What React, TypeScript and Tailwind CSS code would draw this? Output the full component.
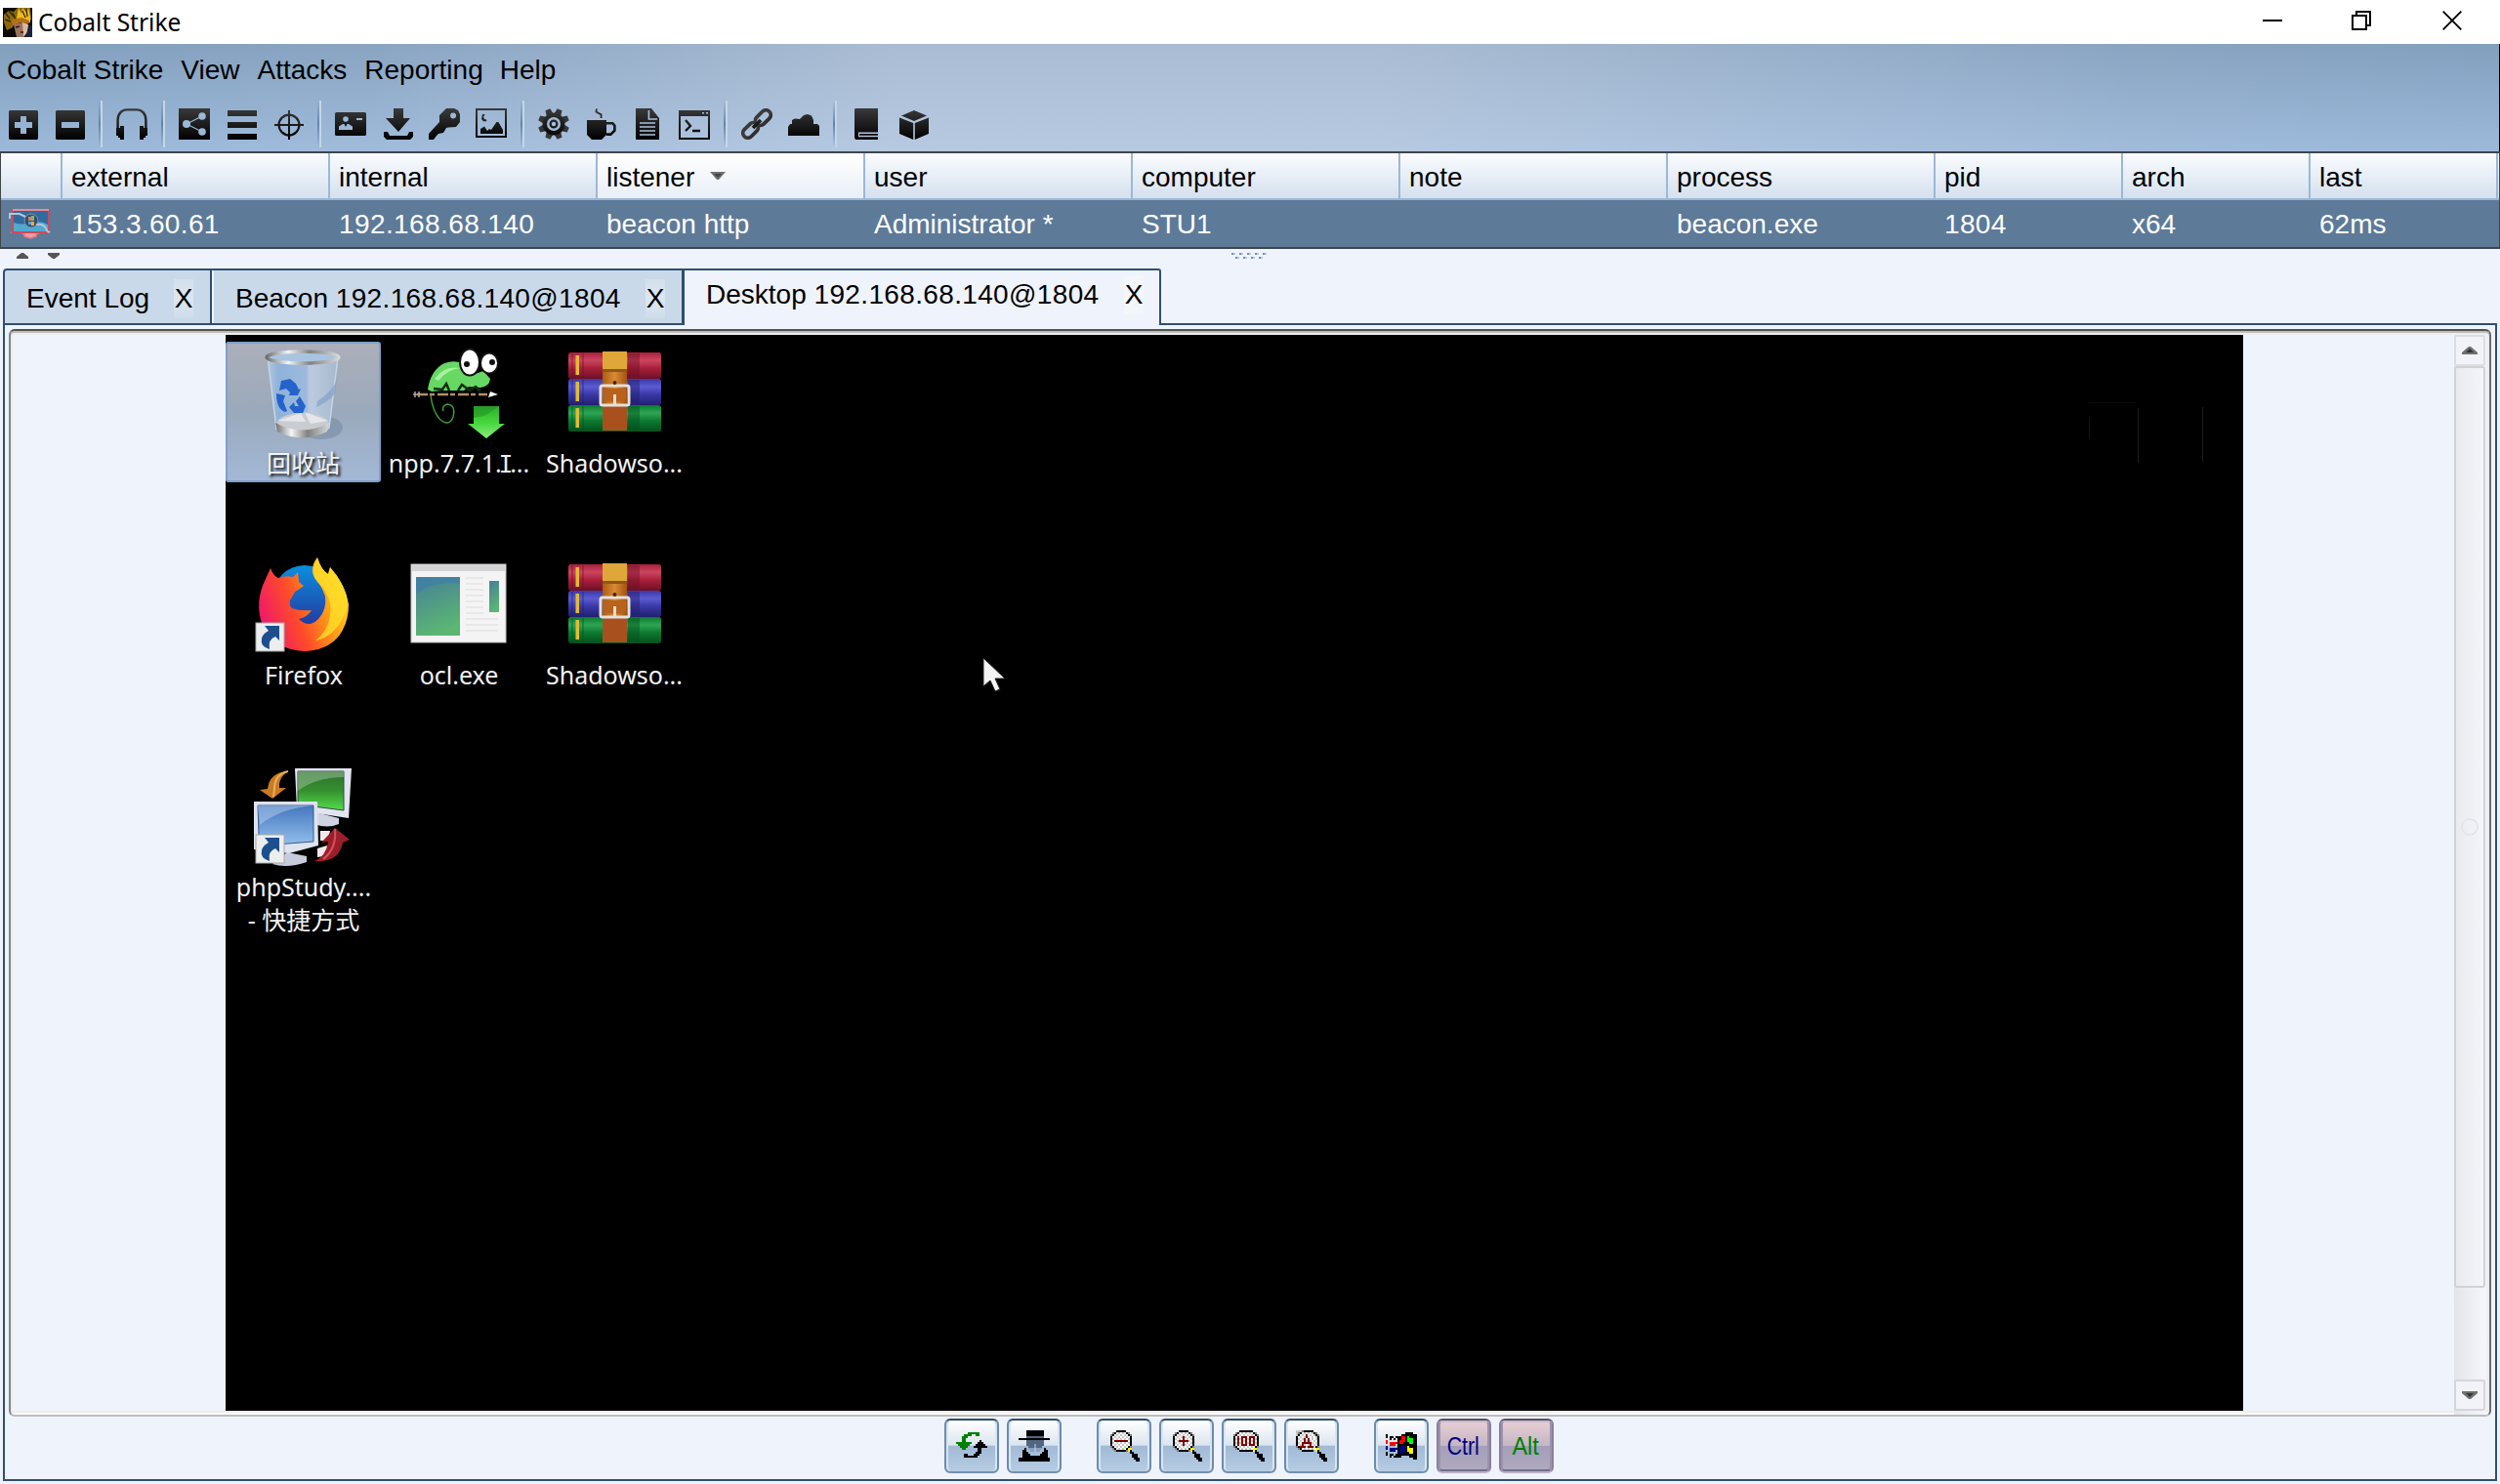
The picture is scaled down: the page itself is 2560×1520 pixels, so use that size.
import React from "react";

const INK = "url(#ink)";

function Defs() {
  return (
    <svg width="0" height="0" className="absolute">
      <defs>
        <linearGradient id="ink" gradientUnits="userSpaceOnUse" x1="0" y1="0" x2="0" y2="16">
          <stop offset="0" stopColor="#3a3a3a" />
          <stop offset="1" stopColor="#000" />
        </linearGradient>
      </defs>
    </svg>
  );
}

/* ---------- toolbar icons, drawn on a 16 unit grid ---------- */
const toolIcons: Record<string, React.ReactNode> = {
  plus: <path fill={INK} fillRule="evenodd" d="M1.5 1h14l.5.5v14l-.5.5h-14l-.5-.5v-14zM7 4h3v3h3v3h-3v3H7v-3H4V7h3z" />,
  minus: <path fill={INK} fillRule="evenodd" d="M1.5 1h14l.5.5v14l-.5.5h-14l-.5-.5v-14zM4 7h9v3H4z" />,
  headphones: (
    <g>
      <path fill="none" stroke={INK} strokeWidth="1.2" d="M.8 10V6C.8 2.500 3 .7 5.500.7h5c2.500 0 4.700 1.800 4.700 5.300v4" />
      <path fill={INK} d="M2 9h2v7H2v-1H1v-1H0v-4h2zM12 9h2v1h2v4h-1v1h-1v1h-2z" />
    </g>
  ),
  share: (
    <g>
      <rect width="16" height="16" fill={INK} />
      <g fill="#9cb8d8" stroke="#9cb8d8">
        <circle cx="4" cy="8" r="1.500" />
        <circle cx="12" cy="4" r="1.400" />
        <circle cx="12" cy="12" r="1.400" />
        <path d="M4 8l8-4M4 8l8 4" strokeWidth=".6" />
      </g>
    </g>
  ),
  bars: <path fill={INK} d="M1 1h15v3H1zM1 7h15v3H1zM1 13h15v3H1z" />,
  cross: (
    <g stroke={INK} fill="none">
      <circle cx="8.500" cy="8.500" r="5.200" strokeWidth="1.100" />
      <path strokeWidth="1" d="M8.500 1v15M1 8.510h15" />
    </g>
  ),
  id: (
    <g>
      <rect y="2" width="16" height="12" rx=".8" fill={INK} />
      <g fill="#9cb8d8">
        <circle cx="5.500" cy="5.500" r="1.400" />
        <path d="M2 11V9.300L4 8h.7l.8 1.500L6.300 8H7l2 1.300V11z" />
        <path d="M11 5h3v1h-3z" />
      </g>
    </g>
  ),
  download: <path fill={INK} d="M6 0h5v5h3.500L8.500 12 2 5h4zM1 12h2l1 2h9l1-2h2v2.500L14.500 16h-12L1 14.500z" />,
  key: (
    <path
      fill={INK}
      fillRule="evenodd"
      d="M9 0h4l2 1 1 2v4l-2 2.500-4 .3-1 .2-1.500 2.500L5 13l-1 1-1.500 2H0v-3l5.500-6L5.500 3.500zM12.500 2.200a1.500 1.500 0 1 0 .1 3 1.500 1.500 0 0 0-.1-3z"
    />
  ),
  picture: (
    <path
      fill={INK}
      fillRule="evenodd"
      d="M0 0h16v15H0zM1 1v13h14V1zM2.500 13v-2.500l2-1.200 1.500 2.200 1-1 1 .5 2.700-4h1L14 11v2zM3.500 3h1.300L4 4.500l.6 1 1 .3v.8H4L3 5.500z"
    />
  ),
  gear: (
    <g>
      {[0, 45, 90, 135, 180, 225, 270, 315].map((a) => (
        <path key={a} fill={INK} d="M6.700 0h2.600l.6 3.500H6.100z" transform={`rotate(${a + 22.5} 8 8)`} />
      ))}
      <circle cx="8" cy="8" r="4.600" fill="none" stroke={INK} strokeWidth="2.200" />
      <circle cx="8" cy="8" r="1.700" fill="none" stroke={INK} strokeWidth="1.100" />
    </g>
  ),
  coffee: (
    <g>
      <path fill={INK} d="M1 6h10v7.500L8.500 16h-5L1 13.500z" />
      <path fill="none" stroke={INK} strokeWidth="1.300" d="M11 7.600h3.200l1 1.200v2.500l-2 2H11" />
      <path fill="none" stroke={INK} strokeWidth=".9" d="M6 .2L5.700 1.800 8.300 3.200V5" />
    </g>
  ),
  doc: (
    <g>
      <path fill={INK} d="M2 0h8l4 5v11H2z" />
      <path fill="none" stroke="#a9c0dc" strokeWidth=".8" d="M8.700 1v4.500H13M4 7.500h8M4 9.500h8M4 11.500h8M4 13.500h8" />
    </g>
  ),
  terminal: (
    <g>
      <path fill={INK} fillRule="evenodd" d="M0 1h16v15H0zM1 4v11h14V4z" />
      <path fill="#a9c0dc" d="M12 2h1v.8h-1zM14 2h1v.8h-1z" />
      <path fill="none" stroke={INK} strokeWidth="1.200" d="M3.500 6l2.500 3-2.500 2.500M7 11.500h4" />
    </g>
  ),
  link: (
    <g fill="none" stroke={INK} strokeWidth="1.900">
      <rect x="-4.500" y="-2.500" width="9" height="5" rx="2.500" transform="translate(11.200 4.800) rotate(-45)" />
      <rect x="-4.500" y="-2.500" width="9" height="5" rx="2.500" transform="translate(4.800 11.200) rotate(-45)" />
      <path d="M6 10l4-4" />
    </g>
  ),
  cloud: <path fill={INK} d="M0 14V9.500L1 8h1V6l1.500-.8L6 5.500 8 3.500 10 3l2 .7L13 6v2h2l1 1v5z" />,
  book: (
    <g>
      <path fill={INK} fillRule="evenodd" d="M2.500 0H14v12.200H4v2.400h10V16H2.500L2 15V.5z" />
      <path fill={INK} d="M4.500 13h9.500v.9H4.500z" />
    </g>
  ),
  box: (
    <g fill={INK}>
      <path d="M8.500 1L15 3.700 8.500 6.500 2 3.700z" />
      <path d="M1 4.700L8.100 7.500V16L1 13zM16 4.700L8.900 7.500V16l7.100-3z" />
    </g>
  ),
};

function ToolIcon({ name }: { name: string }) {
  return (
    <svg className="h-8 w-8 shrink-0" viewBox="0 0 16 16">
      {toolIcons[name]}
    </svg>
  );
}

const toolGroups = [
  ["plus", "minus"],
  ["headphones"],
  ["share", "bars", "cross"],
  ["id", "download", "key", "picture"],
  ["gear", "coffee", "doc", "terminal"],
  ["link", "cloud"],
  ["book", "box"],
];

function Toolbar() {
  return (
    <div className="mt-[13px] flex h-12 items-center pl-[7px]">
      {toolGroups.map((g, i) => (
        <React.Fragment key={i}>
          {i > 0 && (
            <div className="mr-[14px] ml-[14px] flex h-12 w-1 shrink-0">
              <div className="w-0.5 bg-linear-to-b from-transparent via-[#6485a9] to-transparent" />
              <div className="w-0.5 bg-[#c5d5e7]" />
            </div>
          )}
          <div className="flex gap-4">
            {g.map((n) => (
              <ToolIcon key={n} name={n} />
            ))}
          </div>
        </React.Fragment>
      ))}
    </div>
  );
}

/* ---------- pixel icons of the button bar ---------- */
const colors: Record<string, string> = {
  B: "#000000",
  G: "#808080",
  w: "#ffffff",
  g: "#c8c8c8",
  R: "#800000",
  Y: "#ffff00",
  E: "#008000",
  S: "#536680",
  l: "#8aa2c0",
  r: "#ff0000",
  n: "#00ff00",
  u: "#000080",
};

function Pixels({ rows }: { rows: string[] }) {
  return (
    <svg className="h-8 w-8" viewBox="0 0 16 16" shapeRendering="crispEdges">
      {rows.flatMap((row, y) =>
        row.split("").map((c, x) => (colors[c] ? <rect key={x + "-" + y} x={x} y={y} width="1" height="1" fill={colors[c]} /> : null)),
      )}
    </svg>
  );
}

const refresh = [
  "................",
  "......EEEEEE....",
  "....EEEE..EE....",
  "...EEE..........",
  "...EE...........",
  "...EE.......B...",
  "EEEEEEEE...BBB..",
  ".EEEEEE...BBBBB.",
  "..EEEE...BBBBBBB",
  "...EE......BB...",
  "...........BB...",
  "..........BBB...",
  "....BB...BBB....",
  "....BBBBBBB.....",
];
const spy = [
  "....BBBBBBBBB...",
  "....BBBBBBBBB...",
  "....BBBBBBBBB...",
  "....SSSSSSSSS...",
  "BBBBBBBBBBBBBBBB",
  "....SSSSSSSSS...",
  "....SSSSSSSSS...",
  "....SSSSlSSSS...",
  ".....SSSlSSS....",
  "...B.lll.lll.B..",
  "..BB..ll.ll..BB.",
  "..BBB.......BBB.",
  "..BBBB.....BBBB.",
  "..BBBBBBBBBBBBB.",
  "BBBBBBBBBBBBBBBB",
  "BBBBBBBBBBBBBBBB",
];
const tail = ["............BBB.", "............BBB.", ".............BBB", "..............BB"];
const zoomOut = [
  "....BBBBB.......",
  "..GBwgwgwBG.....",
  ".GBwgwgwgwBG....",
  ".BwgwgwgwgwB....",
  ".BgwgwgwgwgB....",
  ".BwRRRRRRRwB....",
  ".BgwgwgwgwgB....",
  ".BwgwgwgwgwB....",
  ".GBwgwgwgwBG....",
  "..GBwgwgwBYY....",
  "...GBBBBBGYB....",
  "...........BB...",
  ...tail,
];
const zoomIn = [
  "....BBBBB.......",
  "..GBwgwgwBG.....",
  ".GBwgwgwgwBG....",
  ".BwgwgRgwgwB....",
  ".BgwgwRwgwgB....",
  ".BwgRRRRRgwB....",
  ".BgwgwRwgwgB....",
  ".BwgwgRgwgwB....",
  ".GBwgwgwgwBG....",
  "..GBwgwgwBYY....",
  "...GBBBBBGYB....",
  "...........BB...",
  ...tail,
];
const zoom100 = [
  "...BBBBBBB......",
  ".GBwgwgwgwBG....",
  "GBwgwgwgwgwBG...",
  "BwRwRRRwRRRwB...",
  "BgRgRwRgRwRgB...",
  "BwRwRgRwRgRwB...",
  "BgRgRwRgRwRgB...",
  "BwRwRRRwRRRwB...",
  "GBwgwgwgwgwBG...",
  ".GBwgwgwgwYY....",
  "...BBBBBBBYB....",
  "...........BB...",
  ...tail,
];
const zoomAuto = [
  "gggGBBBBB.......",
  "gGBwgwgwgBG.....",
  "gBwgwRwgwgBG....",
  "BwgwgRgwgwgB....",
  "BgwgRwRwgwgB....",
  "BwgwRgRgwgwB....",
  "BgwRRRRRgwgB....",
  "BwgRgwgRwgwB....",
  "GBRRRgRRRgBG....",
  ".GBwgwgwgwYY....",
  "...BBBBBB.YB....",
  "...........BB...",
  ...tail,
];
const windowsLogo = [
  "................",
  "..........BBBB..",
  "B.......BBBBBBBB",
  "B.BB.BBBrrBnBBBB",
  "..B.B.BBrrBnnnBB",
  "r.....BrrrBnnnBB",
  "r.rrrrBrrBBBnnBB",
  "..rrr.BBBBBBBBBB",
  "u.....BBuuBYBBBB",
  "u.uuuuBuuuBYYYBB",
  "..uuu.BuuuBYYYBB",
  "B.....BuuBBBYYBB",
  "B.BB.BBBBBBBBBBB",
  "..B.BBBB....BBBB",
  "..............BB",
];

function BarButton({ children, on }: { children: React.ReactNode; on?: boolean }) {
  return (
    <div
      className={
        on
          ? "flex h-14 w-14 items-center justify-center rounded-[6px] border-2 border-t-[#544f6c] border-r-[#8a809c] border-b-[#bdb0c4] border-l-[#8a809c] bg-[#a8a4bb]"
          : "flex h-14 w-14 items-center justify-center rounded-[6px] border-2 border-t-[#2f4f6c] border-r-[#6d8cab] border-b-[#7590ac] border-l-[#6d8cab] bg-[#a8bfd8]"
      }
    >
      <div
        className={
          on
            ? "flex h-full w-full items-center justify-center rounded-[4px] border-2 border-t-[#cdbac5] border-r-[#9c93ab] border-b-[#726d8c] border-l-[#9c93ab] bg-[linear-gradient(to_bottom,#e6ced3_0%,#c4b6c4_49%,#a49fb9_51%,#b0a8c0_100%)]"
            : "flex h-full w-full items-center justify-center rounded-[5px] border-r-2 border-l-2 border-[#d8e5f2] bg-[linear-gradient(to_bottom,#ffffff_0%,#dbe5ef_48%,#a2bad6_51%,#b5cce3_100%)]"
        }
      >
        {children}
      </div>
    </div>
  );
}

/* ---------- title and table drawings ---------- */
function AppIcon() {
  return (
    <svg className="h-[30px] w-[30px]" viewBox="0 0 30 30">
      <rect width="30" height="30" fill="#0c0b08" />
      <path d="M1 7l5-4 5 1 4-4h13l1 12-5 4-12-2-2 6-6 3-3-8z" fill="#8a680f" />
      <path d="M16 0l3 6 1-6 4 5 2-5 2 9v6l-8 0-6-4z" fill="#eebc1c" />
      <path d="M3 6l4 5M2 12l6 2M6 3l5 6M10 5l3 7" stroke="#3a2c04" strokeWidth="1.500" />
      <path d="M20 3l3 7M24 1l1 8" stroke="#2b1e05" strokeWidth="1.200" />
      <path d="M9 12l10-2 8 3v3l-9-1-8 3z" fill="#b5711a" />
      <path d="M11 17l9-2 6 2-1 8-4 5H14z" fill="#9b7260" />
      <path d="M20 15l6 2-1 8-4 5z" fill="#dcb8a4" />
      <path d="M13 20l4-1M18 25h3" stroke="#2a1710" strokeWidth="1.500" />
      <path d="M27 17l3 2v11h-7z" fill="#16233a" />
    </svg>
  );
}

function HostIcon() {
  return (
    <svg className="h-8 w-[44px]" viewBox="0 0 44 32">
      <path d="M3 25h10l4 2 0 2 6 2 6-2 0-2 4-2h8" fill="#f09aa3" stroke="#ee7983" strokeWidth="1.500" />
      <rect x="5" y="2" width="37" height="23" fill="#2f6b9f" stroke="#cc4a5a" strokeWidth="2" />
      <path d="M6 15q9 3 18 0t17 2v7H6z" fill="#52a9d0" />
      <path d="M5 2h37" stroke="#f08a90" strokeWidth="2" />
      <circle cx="24" cy="13" r="7" fill="#35516f" stroke="#7d95ad" />
      <path d="M21 9h3v4h-3z" fill="#c9875a" />
      <path d="M24 8h3v5h-3z" fill="#8fb26a" />
      <path d="M24 14h3v4h-3z" fill="#eea94c" />
      <path d="M21 14h3v3h-3z" fill="#5aa2e0" />
      <path d="M2 11V6h10l6 3M29 17q8-1 10 4t4 3" fill="none" stroke="#b4c6dc" strokeWidth="2" />
    </svg>
  );
}

const columns = [
  { h: "external", v: "153.3.60.61", w: "w-[274px]", t: "tracking-[0.35px]" },
  { h: "internal", v: "192.168.68.140", w: "w-[274px]", t: "tracking-[0.4px]" },
  { h: "listener", v: "beacon http", w: "w-[274px]", t: "" },
  { h: "user", v: "Administrator *", w: "w-[274px]", t: "" },
  { h: "computer", v: "STU1", w: "w-[274px]", t: "" },
  { h: "note", v: "", w: "w-[274px]", t: "" },
  { h: "process", v: "beacon.exe", w: "w-[274px]", t: "" },
  { h: "pid", v: "1804", w: "w-[192px]", t: "tracking-[0.35px]" },
  { h: "arch", v: "x64", w: "w-[192px]", t: "" },
  { h: "last", v: "62ms", w: "w-[192px]", t: "" },
];

function HostTable() {
  return (
    <div className="h-[100px] border-y-2 border-r border-l border-[#40454a]">
      <div className="flex h-12 border-b-2 border-[#9bb8d6] bg-linear-to-b from-[#fafcff] to-[#d5e1ee]">
        <div className="w-[63px] border-r-2 border-[#9bb8d6]" />
        {columns.map((c) => (
          <div
            key={c.h}
            className={`flex items-center border-r-2 border-[#9bb8d6] pt-[3px] pl-[9px] ${c.w} ${c.h === "listener" ? "bg-linear-to-b from-white to-[#e9eff7]" : ""}`}
          >
            <span className="leading-8">{c.h}</span>
            {c.h === "listener" && (
              <svg className="mb-[3px] ml-[16px] h-2.5 w-4" viewBox="0 0 16 10">
                <path d="M0 1h16l-7 8H7z" fill="#707070" />
                <path d="M4 3h8l-4 4z" fill="#444" />
              </svg>
            )}
          </div>
        ))}
      </div>
      <div className="flex h-12 bg-[#5d7a99] text-white">
        <div className="flex w-[63px] items-center pl-[7px]">
          <HostIcon />
        </div>
        {columns.map((c) => (
          <div key={c.h} className={`flex items-center pt-0.5 pl-[9px] ${c.w}`}>
            <span className={`leading-8 ${c.t}`}>{c.v}</span>
          </div>
        ))}
      </div>
    </div>
  );
}

/* ---------- remote desktop icons on a 104 unit grid ---------- */
function ShortcutBadge() {
  return (
    <g transform="translate(3 68)">
      <rect width="29" height="29" fill="#eceeee" stroke="#a9a9a9" />
      <path d="M9 3h15v15l-4-4q-8 3-6 13-10-3-8-11 1-5 7-8z" fill="#1d4f8f" />
    </g>
  );
}

function RecycleBin() {
  return (
    <svg className="h-[104px] w-[104px]" viewBox="0 0 104 104">
      <defs>
        <linearGradient id="bin" x1="0" x2="1">
          <stop offset="0" stopColor="#b3c8de" />
          <stop offset=".15" stopColor="#8fb2d8" />
          <stop offset=".55" stopColor="#9bbbdc" />
          <stop offset=".6" stopColor="#bccbe0" />
          <stop offset="1" stopColor="#a7b8cd" />
        </linearGradient>
        <linearGradient id="rim" x1="0" x2="1">
          <stop offset="0" stopColor="#6f6f70" />
          <stop offset=".3" stopColor="#f5f5f5" />
          <stop offset=".6" stopColor="#818181" />
          <stop offset="1" stopColor="#d8d8d8" />
        </linearGradient>
      </defs>
      <ellipse cx="70" cy="85" rx="22" ry="12" fill="#6c8098" opacity=".45" />
      <path d="M15 12L24 86q27 16 54-1l9-72z" fill="url(#bin)" stroke="#c6d5e5" strokeWidth="1.500" />
      <path d="M66 58q15-10 20-22l-2 14q-6 8-19 14z" fill="#7b9cc4" opacity=".6" />
      <ellipse cx="51" cy="80" rx="26" ry="10" fill="#c9cdd2" />
      <path d="M25 78l24-8 5 9zM77 78l-24-9 6 12z" fill="#eceef0" opacity=".8" />
      <path d="M23 80q27 15 55 0l-2 9q-25 13-51 0z" fill="url(#rim)" />
      <ellipse cx="51" cy="13" rx="37" ry="6" fill="#a9c4e0" stroke="url(#rim)" strokeWidth="3.500" />
      <g fill="#2563cc">
        <path d="M29 37l9-2 6 5 3 6 2-1-3 7-9 0 1-3-4-4-7 2z" />
        <path d="M24 50l9 2-2 6 4 10-2 1q-9-3-9-19z" />
        <path d="M48 53l6 10-3 7H42l-5-6 5-5 1 4h4l-3-5z" />
      </g>
    </svg>
  );
}

function Notepad() {
  return (
    <svg className="h-[104px] w-[104px]" viewBox="0 0 104 104">
      <defs>
        <linearGradient id="arr" x1="0" y1="0" x2="0" y2="1">
          <stop offset="0" stopColor="#2fae2d" />
          <stop offset=".5" stopColor="#44d63c" />
          <stop offset="1" stopColor="#8bed7f" />
        </linearGradient>
      </defs>
      <path d="M20 46q3-20 17-27 12-4 20 1l6 12 14-5 7 8q-1 8-10 9l-12-1-5 4H35l-11 1z" fill="#67d863" />
      <path d="M27 35q10-14 26-11-14 2-22 13z" fill="#a6f29d" />
      <path d="M23 52q2 16 9 24 10 9 14-2 3-12-6-13-6 2-4 7" fill="none" stroke="#3f9a40" strokeWidth="1.500" />
      <path d="M9 51h72" fill="none" stroke="#b0906c" strokeWidth="2.500" strokeDasharray="11 2 5 3" />
      <path d="M7 48v6M11 48v6M5 51h7" stroke="#b9a0a0" strokeWidth="1.500" />
      <path d="M84 48l8 3-10 3z" fill="#fff" />
      <path d="M26 45l9 1 4-6 3 7M51 47l4-6 8 6 6-4 5 5" fill="none" stroke="#0b2f10" strokeWidth="2.500" />
      <ellipse cx="63" cy="18" rx="10" ry="13.500" fill="#fff" stroke="#111" strokeWidth="2" />
      <ellipse cx="83" cy="19" rx="9" ry="10.500" fill="#fff" stroke="#111" strokeWidth="2" />
      <circle cx="60" cy="20" r="3" fill="#111" />
      <circle cx="86" cy="18" r="3" fill="#111" />
      <path d="M67 63h26v18h6L80 96 61 81h6z" fill="url(#arr)" />
      <path d="M67 63h26l-15 10-11 2z" fill="#167f1b" opacity=".4" />
    </svg>
  );
}

function Book({ y, id, a, b, c }: { y: number; id: string; a: string; b: string; c: string }) {
  return (
    <g>
      <defs>
        <linearGradient id={id} x1="0" y1="0" x2="0" y2="1">
          <stop offset="0" stopColor={a} />
          <stop offset=".3" stopColor={b} />
          <stop offset=".6" stopColor={a} />
          <stop offset="1" stopColor={c} />
        </linearGradient>
      </defs>
      <rect x="5" y={y} width="95" height="27" rx="2.500" fill={`url(#${id})`} />
      <rect x="66" y={y + 1} width="12" height="24" fill={c} opacity=".45" />
      <path d={`M12.500 ${y + 3}h3.500v20h-3.500z`} fill="#e3bb35" />
      <path d={`M9 ${y + 1}v25M20 ${y + 1}v25`} stroke={c} strokeWidth="1" opacity=".7" />
    </g>
  );
}

function Archive({ n }: { n: string }) {
  return (
    <svg className="h-[104px] w-[104px]" viewBox="0 0 104 104">
      <defs>
        <linearGradient id={`belt${n}`} x1="0" x2="1">
          <stop offset="0" stopColor="#a95d12" />
          <stop offset=".5" stopColor="#d98a35" />
          <stop offset="1" stopColor="#a2530f" />
        </linearGradient>
      </defs>
      <Book y={8} id={`red${n}`} a="#a81f3a" b="#cc4660" c="#6d1026" />
      <Book y={35} id={`blue${n}`} a="#3a38a8" b="#5c5bd0" c="#20206c" />
      <Book y={62} id={`green${n}`} a="#0b7a30" b="#2fa553" c="#04501d" />
      <rect x="40" y="7" width="25" height="81" fill={`url(#belt${n})`} />
      <path d="M40 7h25v18H40z" fill="#dfa63a" />
      <path d="M40 25h25v3H40z" fill="#8e5713" />
      <path d="M40 62h25v26H40z" fill="#a9501f" />
      <rect x="38" y="42" width="29" height="20" rx="2" fill="none" stroke="#e4e0dc" strokeWidth="3" />
      <path d="M41 45h23v11q-11 6-23 0z" fill="#b9621b" />
      <path d="M52.500 51v10" stroke="#ddd" strokeWidth="3" />
      <circle cx="52.500" cy="39" r="2" fill="#4a2405" />
    </svg>
  );
}

function Firefox() {
  return (
    <svg className="h-[104px] w-[104px]" viewBox="0 0 104 104">
      <defs>
        <linearGradient id="fire" x1="0" y1=".6" x2="1" y2=".2">
          <stop offset="0" stopColor="#f0196b" />
          <stop offset=".35" stopColor="#ff4a2a" />
          <stop offset=".65" stopColor="#ff9a17" />
          <stop offset="1" stopColor="#ffe52c" />
        </linearGradient>
        <linearGradient id="globe" x1="0" y1="0" x2="0" y2="1">
          <stop offset="0" stopColor="#0a8fe0" />
          <stop offset="1" stopColor="#26349a" />
        </linearGradient>
      </defs>
      <circle cx="53" cy="42" r="33" fill="url(#globe)" />
      <path
        d="M18 12q3 8 8 10 8-3 15-1l5-5 1 10 5 4q-5 4-9 6-3 6-5 9-1 5 2 8 8 3 20 2-4 7-13 9 10 10 20 0 9-10 7-23-3-10-10-18Q57 12 66 1q4 13 11 17l2-7q16 18 19 38 0 15-6 26-10 20-38 22-30 0-44-26-9-24 3-48z"
        fill="url(#fire)"
      />
      <path d="M66 1q4 13 11 17l2-7q14 15 18 34-2 20-16 33-9 7-17 8 18-14 15-38-3-13-13-22-9-10 0-25z" fill="#ffe12a" opacity=".75" />
      <ShortcutBadge />
    </svg>
  );
}

function Executable() {
  return (
    <svg className="h-[104px] w-[104px]" viewBox="0 0 104 104">
      <defs>
        <linearGradient id="pane" x1="0" y1="0" x2=".3" y2="1">
          <stop offset="0" stopColor="#467f98" />
          <stop offset="1" stopColor="#5bb573" />
        </linearGradient>
      </defs>
      <rect x="3" y="8" width="97" height="80" fill="#f4f4f4" stroke="#c2c2c2" />
      <rect x="4" y="9" width="95" height="6" fill="#d4d4d6" />
      <rect x="8" y="21" width="45" height="60" fill="url(#pane)" />
      <path d="M8 38q22-14 45-10v-7H8z" fill="#3e7fa6" opacity=".7" />
      <rect x="83" y="25" width="10" height="32" fill="url(#pane)" />
      <path d="M59 22h18M59 28h18M59 34h18M59 40h18M59 46h18M59 52h18M59 58h18M59 64h33M59 70h33M59 76h33" stroke="#e4e4e4" strokeWidth="1.500" />
    </svg>
  );
}

function PhpStudy() {
  return (
    <svg className="h-[104px] w-[104px]" viewBox="0 0 104 104">
      <defs>
        <linearGradient id="scrG" x1="0" y1="0" x2="0" y2="1">
          <stop offset="0" stopColor="#2f6e31" />
          <stop offset=".5" stopColor="#35912f" />
          <stop offset="1" stopColor="#55dc4c" />
        </linearGradient>
        <linearGradient id="scrB" x1="0" y1="0" x2="0" y2="1">
          <stop offset="0" stopColor="#4477bd" />
          <stop offset="1" stopColor="#94c0ee" />
        </linearGradient>
      </defs>
      <path d="M64 45l24 6v6q-12 5-25 0z" fill="#cfd3e2" />
      <path d="M43 0h58l-3 51-53-8z" fill="#e2e4f0" />
      <path d="M46 3h47v40l-47-6z" fill="url(#scrG)" stroke="#2d4d3a" />
      <path d="M46 3h47v6q-28 0-47 14z" fill="#a2c5a0" opacity=".5" />
      <path d="M36 3q-10 6-9 17h7L20 31 7 22l8-1Q17 4 36 3z" fill="#c67b25" />
      <path d="M36 3q-14 3-14 18l-1 8" fill="none" stroke="#f0ae52" strokeWidth="2" />
      <path d="M35 86l20 4v6q-20 7-35 2z" fill="#c7cbdc" />
      <path d="M1 34h65l1 45-30 8-36-4z" fill="#dfe3f0" />
      <path d="M5 38h57v37l-52 4-4-10z" fill="url(#scrB)" stroke="#3a5d8c" />
      <path d="M5 38h57q-34 3-55 20z" fill="#b5d0f0" opacity=".5" />
      <path d="M69 64h10l-2 10h-8zM66 82l10-3 3 10-13 2z" fill="#f3e8ec" />
      <path d="M84 61l15 12-7 3q-4 21-29 19 12-5 14-20l-7 1z" fill="#9b1f2a" />
      <path d="M84 62q2 20-12 31" fill="none" stroke="#d3525a" strokeWidth="2" />
      <ShortcutBadge />
    </svg>
  );
}

function DesktopItem({ icon, children, selected }: { icon: React.ReactNode; children: React.ReactNode; selected?: boolean }) {
  return (
    <div
      className={
        selected
          ? "h-36 w-[159px] rounded-[3px] border-2 border-[#7fa0cb] bg-linear-to-b from-[#abafba] via-[#9aa9bb] to-[#a3b8d6] pt-px [text-shadow:2px_2px_3px_#000]"
          : "w-[160px] pt-[3px]"
      }
    >
      <div className="flex flex-col items-center">
        {icon}
        <div className="-mx-2 text-center text-[25px] leading-[34px] whitespace-nowrap text-[#f2f2f2] [font-family:'Noto_Sans','Noto_Sans_CJK_SC',sans-serif]">
          {children}
        </div>
      </div>
    </div>
  );
}

function RemoteDesktop() {
  return (
    <div className="relative h-[1102px] w-[2066px] bg-black pt-[7px]">
      <div className="grid w-[480px] grid-cols-[159px_159px_160px] grid-rows-[217px_217px_217px]">
        <DesktopItem selected icon={<RecycleBin />}>
          回收站
        </DesktopItem>
        <DesktopItem icon={<Notepad />}>
          npp.7.7.1.<span className="-mx-[3px] text-[24px] [font-family:'DejaVu_Sans_Mono',monospace]">I</span>...
        </DesktopItem>
        <DesktopItem icon={<Archive n="1" />}>Shadowso...</DesktopItem>
        <DesktopItem icon={<Firefox />}>Firefox</DesktopItem>
        <DesktopItem icon={<Executable />}>ocl.exe</DesktopItem>
        <DesktopItem icon={<Archive n="2" />}>Shadowso...</DesktopItem>
        <DesktopItem icon={<PhpStudy />}>
          phpStudy....
          <br />- 快捷方式
        </DesktopItem>
      </div>
      <svg className="absolute top-[330px] left-[775px] h-[38px] w-[26px]" viewBox="0 0 26 38">
        <path d="M1 1v29l7-6 5 11 5-2-5-11h10z" fill="#f4f4f4" stroke="#222" strokeWidth="1" />
      </svg>
      <div className="absolute top-[75px] left-[1958px] h-14 w-px bg-[#1c1c1c]" />
      <div className="absolute top-[74px] left-[2024px] h-14 w-px bg-[#1c1c1c]" />
      <div className="absolute top-[84px] left-[1908px] h-[22px] w-px bg-[#161616]" />
      <div className="absolute top-[69px] left-[1908px] h-px w-12 bg-[#0c0c0c]" />
    </div>
  );
}

function ScrollBar() {
  return (
    <div className="flex w-8 flex-col bg-linear-to-r from-[#e3e5e9] to-[#f5f6fb]">
      <div className="flex h-8 items-center justify-center rounded-[2px] border-2 border-[#dcdde3] bg-[#f1f3f9]">
        <svg className="h-2 w-4" viewBox="0 0 16 8">
          <path d="M7 0h2l7 6v2H0V6z" fill="#707070" />
          <path d="M8 2l4 4H4z" fill="#333" />
        </svg>
      </div>
      <div className="flex h-[944px] items-center justify-center rounded-[3px] border-2 border-[#d0d2d7] bg-linear-to-r from-[#eaebee] to-[#f3f5fa]">
        <div className="h-[18px] w-[18px] rounded-full border-2 border-[#e3e5e9]" />
      </div>
      <div className="h-[94px]" />
      <div className="flex h-8 items-center justify-center rounded-[2px] border-2 border-[#d5d6dc] bg-[#f1f3f9]">
        <svg className="h-2 w-4" viewBox="0 0 16 8">
          <path d="M0 0h16v2L9 8H7L0 2z" fill="#707070" />
          <path d="M8 6l4-4H4z" fill="#333" />
        </svg>
      </div>
    </div>
  );
}

function CloseX({ light }: { light?: boolean }) {
  return (
    <span
      className={
        light
          ? "flex h-10 w-5 items-center justify-center bg-[#f3f6fb] leading-8"
          : "flex h-10 w-5 items-center justify-center bg-linear-to-b from-[#d3dfec] via-[#dde7f2] to-[#cfdceb] leading-8"
      }
    >
      X
    </span>
  );
}

export default function App() {
  return (
    <div className="h-[1520px] w-[2560px] overflow-hidden bg-[#eff3fb] text-[28px] text-black [font-family:'Liberation_Sans',Arial,sans-serif]">
      <Defs />
      <div className="flex h-[45px] items-center bg-white">
        <div className="ml-[3px] flex items-center gap-1.5">
          <AppIcon />
          <span className="text-[24.500px] leading-8 [font-family:'Noto_Sans',sans-serif]">Cobalt Strike</span>
        </div>
        <div className="mr-[39px] mb-[3px] ml-auto flex items-center gap-[71px]">
          <div className="h-0.5 w-5 bg-black" />
          <svg className="h-5 w-5" viewBox="0 0 20 20" fill="none" stroke="#000" strokeWidth="2" shapeRendering="crispEdges">
            <path d="M1 5h14v14H1zM5 5V1h14v14h-4" />
          </svg>
          <svg className="ml-0.5 h-5 w-5" viewBox="0 0 20 20" stroke="#000" strokeWidth="1.800">
            <path d="M.7.7l18.600 18.600M19.300.7L.7 19.300" />
          </svg>
        </div>
      </div>

      <div className="h-[110px] border-r border-black bg-[linear-gradient(to_right,rgba(200,210,226,0)_0%,rgba(200,210,226,0.1)_15%,rgba(212,219,233,0.48)_36%,rgba(212,219,233,0.48)_55%,rgba(200,210,226,0.1)_85%,rgba(200,210,226,0)_100%),linear-gradient(to_bottom,#829fbe,#9cb9da)]">
        <div className="flex h-[45px] items-end gap-[18px] pb-0.5 pl-[7px] leading-8">
          <span>Cobalt Strike</span>
          <span>View</span>
          <span>Attacks</span>
          <span>Reporting</span>
          <span className="-ml-px">Help</span>
        </div>
        <Toolbar />
      </div>

      <HostTable />

      <div className="flex h-5 items-start pt-1">
        <svg className="ml-[17px] h-2 w-[45px]" viewBox="0 0 45 8">
          <path d="M5 0h2l5 4v2H0V4z" fill="#555" />
          <path d="M32 0h12v2l-5 4h-2l-5-4z" fill="#555" />
        </svg>
        <svg className="ml-[1199px] h-1.5 w-9" viewBox="0 0 36 6" shapeRendering="crispEdges">
          {[0, 8, 16, 24, 32].map((x) => (
            <g key={x}>
              <path d={`M${x} 0h2v2h-2z`} fill="#6f8fb8" />
              <path d={`M${x + 2} 0h2v2h-2z`} fill="#b8c8dc" />
            </g>
          ))}
          {[4, 12, 20, 28].map((x) => (
            <g key={x}>
              <path d={`M${x} 4h2v2h-2z`} fill="#6f8fb8" />
              <path d={`M${x + 2} 4h2v2h-2z`} fill="#b8c8dc" />
            </g>
          ))}
        </svg>
      </div>

      <div className="relative z-10 ml-[3px] flex h-[58px]">
        <div className="flex w-[214px] items-center rounded-tl-[4px] border-2 border-[#304f6f] bg-[#cad9e9] pt-[3px] pl-[22px]">
          <span className="w-[151px] leading-8">Event Log</span>
          <CloseX />
        </div>
        <div className="flex w-[484px] items-center border-y-2 border-r-[3px] border-[#304f6f] bg-[#cad9e9] pt-[3px] shadow-[inset_2px_0_0_#eef2fa]">
          <span className="ml-6 w-[420px] leading-8">
            Beacon <span className="tracking-[0.35px]">192.168.68.140@1804</span>
          </span>
          <CloseX />
        </div>
        <div className="flex w-[488px] items-center rounded-tr-[3px] border-t-2 border-r-2 border-[#304f6f] bg-[#eff3fb] pb-[7px]">
          <span className="ml-[22px] w-[428px] leading-8">
            Desktop <span className="tracking-[0.35px]">192.168.68.140@1804</span>
          </span>
          <CloseX light />
        </div>
        <div className="mr-[3px] flex-1 border-b-2 border-[#304f6f]" />
      </div>

      <div className="mx-[3px] h-[1184px] border-x-2 border-b-2 border-[#304f6f] px-1 pt-1">
        <div className="flex h-[1114px] rounded-[6px] border-2 border-t-[#50544f] border-r-[#6b6c6b] border-b-[#bdbdbd] border-l-[#858585] pt-1 pl-[220px] shadow-[inset_0_2px_0_#bdbdbd,inset_0_4px_0_#eeeeee,inset_2px_0_0_#ececec,inset_0_-2px_0_#fafafa,inset_0_-4px_0_#eeeeee,inset_-2px_0_0_#ececec]">
          <RemoteDesktop />
          <div className="mr-1 ml-auto flex">
            <ScrollBar />
          </div>
        </div>
        <div className="flex justify-center pt-0.5 pr-[3px]">
          <div className="flex gap-9">
            <div className="flex gap-2">
              <BarButton>
                <Pixels rows={refresh} />
              </BarButton>
              <BarButton>
                <Pixels rows={spy} />
              </BarButton>
            </div>
            <div className="flex gap-2">
              {[zoomOut, zoomIn, zoom100, zoomAuto].map((rows, i) => (
                <BarButton key={i}>
                  <Pixels rows={rows} />
                </BarButton>
              ))}
            </div>
            <div className="flex gap-2">
              <BarButton>
                <Pixels rows={windowsLogo} />
              </BarButton>
              <BarButton on>
                <span className="inline-block scale-x-[0.82] text-[26px] leading-7 text-[#000080]">Ctrl</span>
              </BarButton>
              <BarButton on>
                <span className="inline-block scale-x-[0.9] text-[26px] leading-7 text-[#008000]">Alt</span>
              </BarButton>
            </div>
          </div>
        </div>
      </div>
    </div>
  );
}
